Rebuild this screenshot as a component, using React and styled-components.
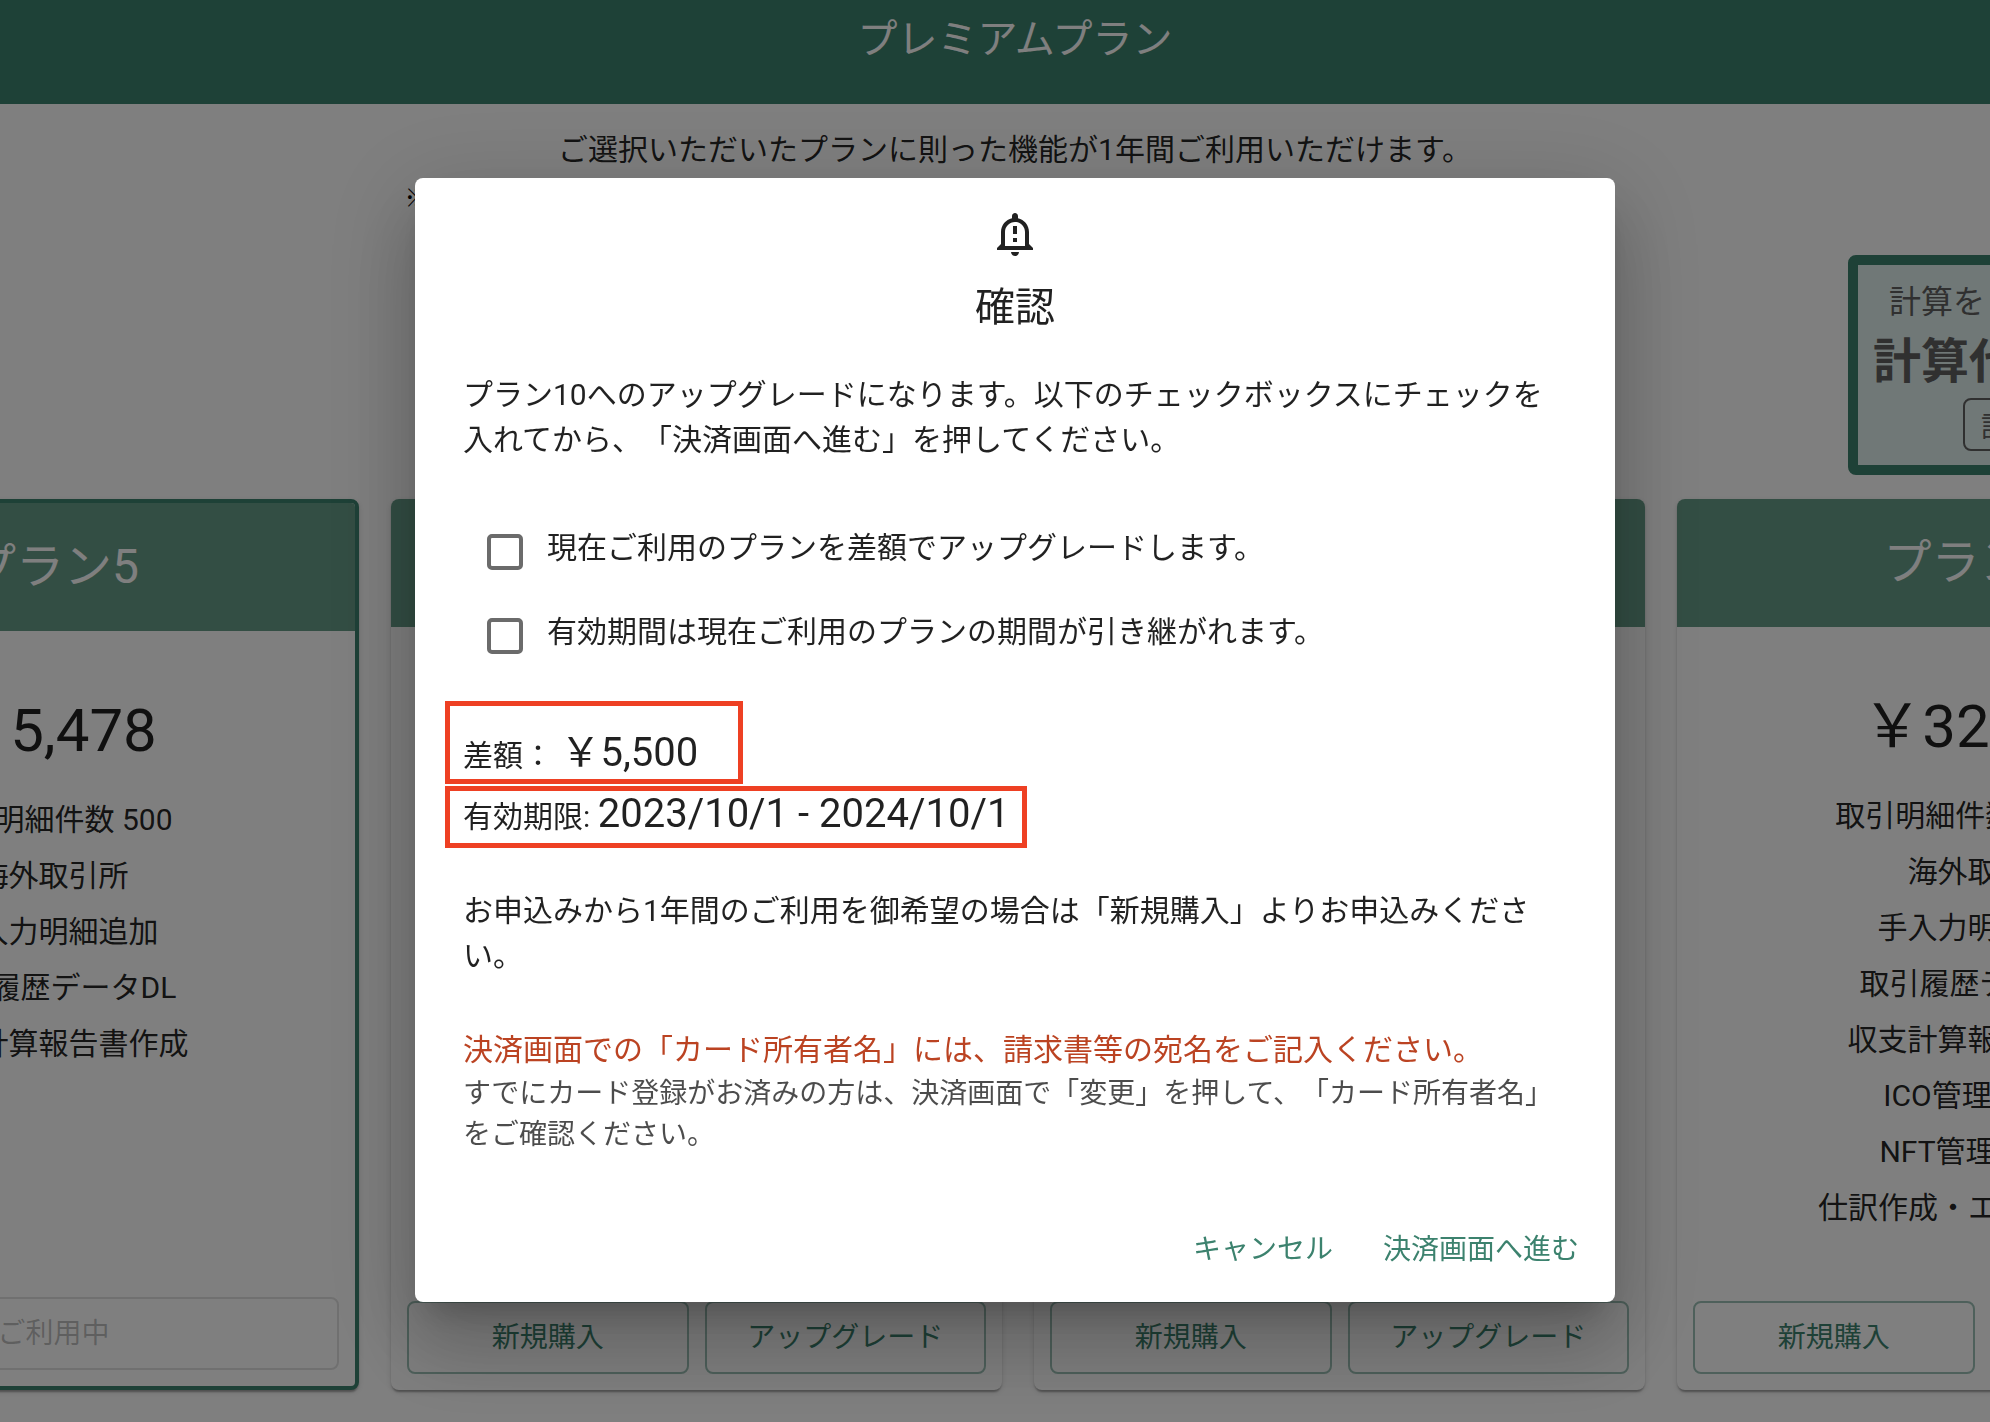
import React from "react"
import styled, { createGlobalStyle, css } from "styled-components"
import { MdOutlineNotificationImportant } from "react-icons/md"

const PRIMARY = "#3c826e"
const PRIMARY_LIGHT = "#669c88"
const TEXT = "rgba(0, 0, 0, 0.87)"
const MARK_RED = "#ee4023"

const GlobalStyle = createGlobalStyle`
  * {
    box-sizing: border-box;
  }

  body {
    margin: 0;
    overflow: hidden;
    background: #fff;
    color: ${TEXT};
    font-family: Roboto, "Noto Sans CJK JP", sans-serif;
    font-size: 30px;
    line-height: 45px;
    text-spacing-trim: space-all;
  }

  h1, h2, h3, p, ul {
    margin: 0;
    padding: 0;
    font-weight: 400;
  }

  button, input {
    margin: 0;
    font-family: inherit;
  }
`

/* page */

const PageHeader = styled.header`
  padding: 0 0 24px 40px;
  background: ${PRIMARY};
`

const PageTitle = styled.h1`
  color: #fff;
  font-size: 40px;
  line-height: 80px;
  text-align: center;
`

const Intro = styled.section`
  padding: 22px 0 32px 40px;
  line-height: 48px;
  text-align: center;
`

const Note = styled.p`
  padding-top: 1px;
  font-size: 25px;
  color: #000;

  && {
    font-weight: 700;
  }
`

const PlansViewport = styled.section`
  display: flex;
  justify-content: center;
  padding: 0 0 32px 46px;
  overflow: hidden;
`

const PlansTrack = styled.div`
  display: flex;
  flex-direction: column;
  flex-shrink: 0;
  gap: 24px;
`

const Banner = styled.aside`
  display: flex;
  flex-direction: column;
  align-items: center;
  align-self: flex-end;
  margin-right: 6px;
  padding: 13px 15px 14px;
  border: 10px solid ${PRIMARY};
  border-radius: 8px;
  background: #e0f0ee;
  color: #606060;
`

const BannerLead = styled.p`
  font-size: 32px;
  line-height: 48px;
`

const BannerTitle = styled.h2`
  font-size: 48px;
  line-height: 72px;

  && {
    font-weight: 700;
  }
`

const BannerButton = styled.button`
  height: 53px;
  padding: 0 16px;
  border: 2px solid #606060;
  border-radius: 8px;
  background: none;
  color: inherit;
  font-size: 28px;
`

const PlanList = styled.div`
  display: flex;
  gap: 32px;
`

const PlanCard = styled.article`
  display: flex;
  flex-direction: column;
  width: 611px;
  border-radius: 8px;
  background: #fff;
  overflow: hidden;
  text-align: center;
  box-shadow: 0 4px 2px -2px rgba(0, 0, 0, 0.2), 0 2px 2px rgba(0, 0, 0, 0.14),
    0 2px 6px rgba(0, 0, 0, 0.12);

  ${({ $current }) => $current && css`
    border: 4px solid ${PRIMARY};
  `}
`

const PlanName = styled.h3`
  background: ${PRIMARY_LIGHT};
  color: #fff;
  font-size: 48px;
  line-height: 128px;
`

const PlanPrice = styled.p`
  padding: 64px 0 25px;
  font-size: 60px;
  line-height: 72px;
`

const FeatureList = styled.ul`
  margin-bottom: 65px;
  line-height: 56px;
  list-style: none;
`

const PlanActions = styled.div`
  display: flex;
  gap: 16px;
  margin-top: auto;
  padding: 0 16px 16px;
`

const PlanButton = styled.button`
  flex: 1;
  height: 73px;
  padding-bottom: 6px;
  border: 2px solid rgba(60, 130, 110, 0.5);
  border-radius: 8px;
  background: none;
  color: ${PRIMARY};
  font-size: 28px;

  &:disabled {
    border-color: rgba(0, 0, 0, 0.12);
    color: rgba(0, 0, 0, 0.26);
  }
`

/* dialog */

const Backdrop = styled.div`
  position: fixed;
  inset: 0;
  display: flex;
  align-items: center;
  justify-content: center;
  padding: 57px 0 0 40px;
  background: rgba(0, 0, 0, 0.5);
`

const Dialog = styled.div`
  display: flex;
  flex-direction: column;
  width: 100%;
  max-width: 1200px;
  padding-top: 32px;
  border-radius: 8px;
  background: #fff;
  box-shadow: 0 22px 30px -14px rgba(0, 0, 0, 0.2),
    0 48px 76px 6px rgba(0, 0, 0, 0.14), 0 18px 92px 16px rgba(0, 0, 0, 0.12);
`

const DialogIcon = styled(MdOutlineNotificationImportant)`
  align-self: center;
  font-size: 48px;
`

const DialogTitle = styled.h2`
  margin: 18px 0 32px;
  font-size: 40px;
  line-height: 64px;
  text-align: center;
`

const DialogContent = styled.div`
  padding: 0 48px;
`

const CheckGroup = styled.div`
  padding: 48px 0 23px 24px;
`

const CheckRow = styled.label`
  display: flex;
  align-items: center;
  gap: 24px;
  height: 84px;
`

const CheckText = styled.span`
  padding-bottom: 8px;
`

const Checkbox = styled.input`
  appearance: none;
  width: 36px;
  height: 36px;
  border: 4px solid #6b6b6b;
  border-radius: 5px;

  &:checked {
    border-color: ${PRIMARY};
    background: ${PRIMARY};
  }
`

const Summary = styled.div`
  display: flex;
  flex-direction: column;
  align-items: flex-start;
  gap: 2px;
  margin: 0 0 40px -18px;
`

const MarkedLine = styled.p`
  && {
    padding: ${({ $roomy }) => ($roomy ? "24px 40px 1px 13px" : "0 13px 4px 13px")};
  }
  border: 5px solid ${MARK_RED};
  white-space: pre;
`

const Amount = styled.span`
  font-size: 40px;
`

const Warning = styled.p`
  margin-top: 49px;
  color: #bb4322;
`

const Caption = styled.p`
  padding-top: 1px;
  color: rgba(0, 0, 0, 0.7);
  font-size: 28px;
  line-height: 41px;
`

const DialogActions = styled.div`
  display: flex;
  justify-content: flex-end;
  gap: 18px;
  padding: 59px 20px 16px;
`

const TextButton = styled.button`
  height: 72px;
  padding: 0 16px 6px;
  border: 0;
  border-radius: 8px;
  background: none;
  color: ${PRIMARY};
  font-size: 28px;
`

const BASE_FEATURES = ["海外取引所", "手入力明細追加", "取引履歴データDL", "収支計算報告書作成"]

const PLANS = [
  {
    name: "プラン5",
    price: "￥5,478",
    current: true,
    features: ["取引明細件数 500", ...BASE_FEATURES],
  },
  {
    name: "プラン10",
    price: "￥10,978",
    features: ["取引明細件数 5,000", ...BASE_FEATURES],
  },
  {
    name: "プラン15",
    price: "￥16,478",
    features: ["取引明細件数 10,000", ...BASE_FEATURES],
  },
  {
    name: "プラン20",
    price: "￥32,978",
    features: [
      "取引明細件数 100,000",
      ...BASE_FEATURES,
      "ICO管理ツール",
      "NFT管理ツール",
      "仕訳作成・エクスポート",
    ],
  },
]

const Plan = ({ name, price, features, current }) => (
  <PlanCard $current={current}>
    <PlanName>{name}</PlanName>
    <PlanPrice>{price}</PlanPrice>
    <FeatureList>
      {features.map(feature => (
        <li key={feature}>{feature}</li>
      ))}
    </FeatureList>
    <PlanActions>
      {current ? (
        <PlanButton disabled>ご利用中</PlanButton>
      ) : (
        <>
          <PlanButton>新規購入</PlanButton>
          <PlanButton>アップグレード</PlanButton>
        </>
      )}
    </PlanActions>
  </PlanCard>
)

const UpgradeDialog = () => (
  <Backdrop>
    <Dialog role="dialog" aria-modal="true" aria-labelledby="upgrade-title">
      <DialogIcon aria-hidden="true" />
      <DialogTitle id="upgrade-title">確認</DialogTitle>
      <DialogContent>
        <p>
          プラン10へのアップグレードになります。以下のチェックボックスにチェックを入れてから、「決済画面へ進む」を押してください。
        </p>
        <CheckGroup>
          <CheckRow htmlFor="agree-difference">
            <Checkbox type="checkbox" id="agree-difference" />
            <CheckText>現在ご利用のプランを差額でアップグレードします。</CheckText>
          </CheckRow>
          <CheckRow htmlFor="agree-period">
            <Checkbox type="checkbox" id="agree-period" />
            <CheckText>有効期間は現在ご利用のプランの期間が引き継がれます。</CheckText>
          </CheckRow>
        </CheckGroup>
        <Summary>
          <MarkedLine $roomy>
            差額： <Amount>￥5,500</Amount>
          </MarkedLine>
          <MarkedLine>
            有効期限: <Amount>2023/10/1 - 2024/10/1</Amount>
          </MarkedLine>
        </Summary>
        <p>
          お申込みから1年間のご利用を御希望の場合は「新規購入」よりお申込みください。
        </p>
        <Warning>
          決済画面での「カード所有者名」には、請求書等の宛名をご記入ください。
        </Warning>
        <Caption>
          すでにカード登録がお済みの方は、決済画面で「変更」を押して、「カード所有者名」をご確認ください。
        </Caption>
      </DialogContent>
      <DialogActions>
        <TextButton>キャンセル</TextButton>
        <TextButton>決済画面へ進む</TextButton>
      </DialogActions>
    </Dialog>
  </Backdrop>
)

const App = () => (
  <>
    <GlobalStyle />
    <PageHeader>
      <PageTitle>プレミアムプラン</PageTitle>
    </PageHeader>
    <main>
      <Intro>
        <p>ご選択いただいたプランに則った機能が1年間ご利用いただけます。</p>
        <Note>
          ※有効期間のプラン変更は差額でアップグレードとします。ダウングレードや解約による返金はできません。
        </Note>
      </Intro>
      <PlansViewport>
        <PlansTrack>
          <Banner>
            <BannerLead>計算をまるごと任せます</BannerLead>
            <BannerTitle>計算代行サービス</BannerTitle>
            <BannerButton>計算代行とは</BannerButton>
          </Banner>
          <PlanList>
            {PLANS.map(plan => (
              <Plan key={plan.name} {...plan} />
            ))}
          </PlanList>
        </PlansTrack>
      </PlansViewport>
    </main>
    <UpgradeDialog />
  </>
)

export default App
